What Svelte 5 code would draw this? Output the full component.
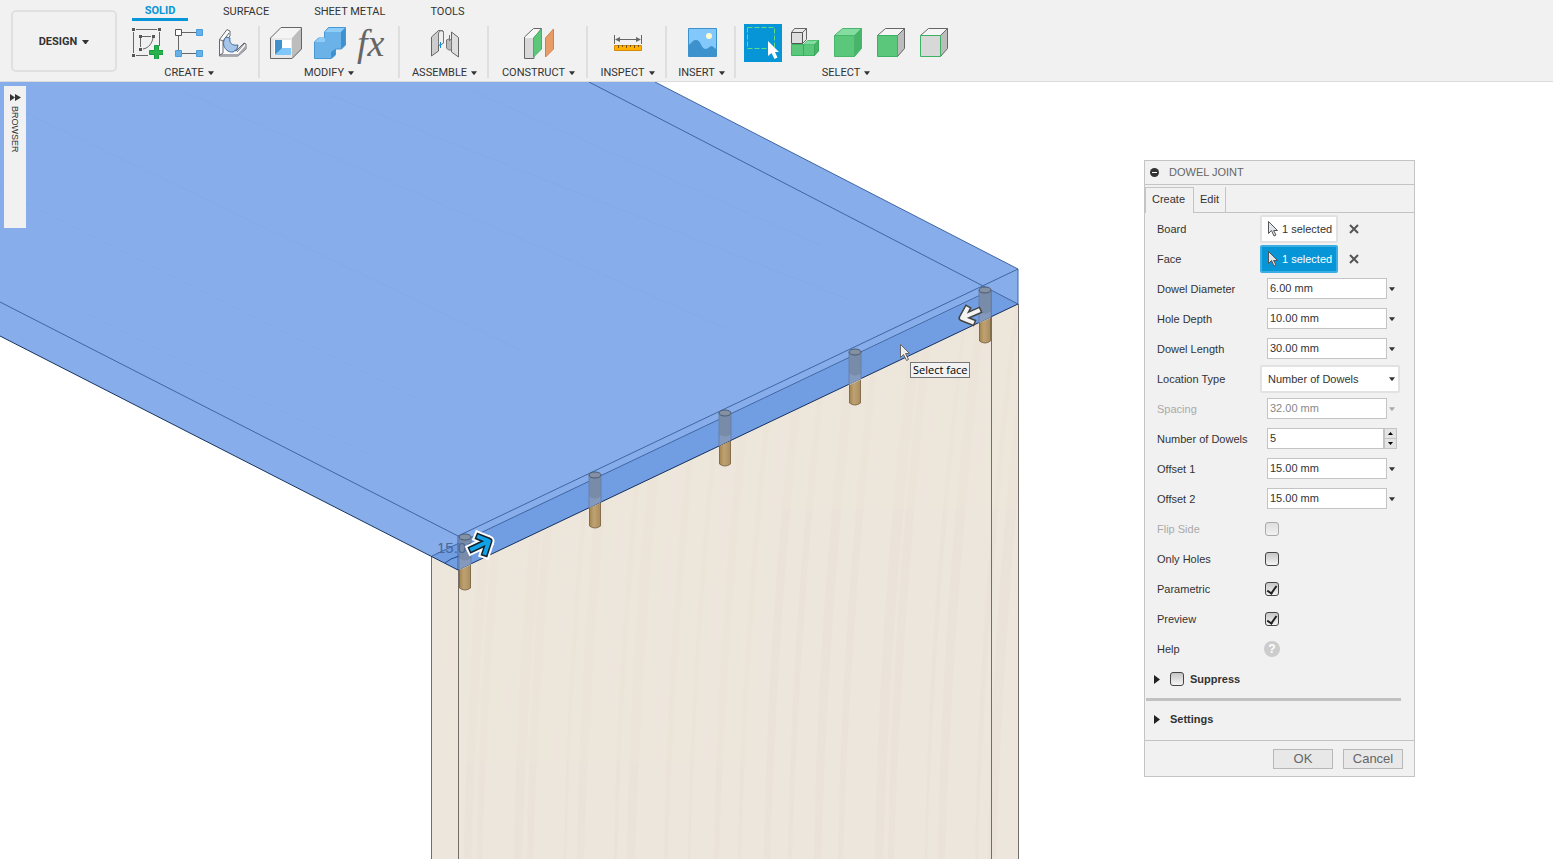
<script>
  const tabs = ['SOLID', 'SURFACE', 'SHEET METAL', 'TOOLS'];
  const dowels = [[465, 537], [595, 475], [725, 413], [855, 352], [985, 290]];
  const checks = [
    { id: 'flip', label: 'Flip Side', on: false, off: true },
    { id: 'holes', label: 'Only Holes', on: false },
    { id: 'parametric', label: 'Parametric', on: true },
    { id: 'preview', label: 'Preview', on: true }
  ];
  const streaks = Array.from({ length: 34 }, (_, i) => ({
    x: 440 + i * 17 + ((i * 7) % 11),
    w: 2 + ((i * 5) % 7),
    tone: i % 3 ? '#e7dccf' : '#f0e9df'
  }));
</script>

{#snippet caret()}
  <svg class="caret" width="7" height="4" viewBox="0 0 7 4" aria-hidden="true"><path d="M0 0h7L4 4H3z" /></svg>
{/snippet}

{#snippet pointer()}
  <svg width="12" height="18" viewBox="0 0 12 18" aria-hidden="true"><path d="M1.500 1.500v12l3-3 2.500 5.500 2-1-2.400-4.500h3.900z" fill="#dfe6ee" stroke="#555" /></svg>
{/snippet}

{#snippet field(id, label, value, off = false)}
  <div class="row" class:off>
    <label for={id}>{label}</label>
    <div class="value entry">
      <input {id} type="text" {value} disabled={off} />
      <button type="button" class="drop" aria-label="{label} options" disabled={off}>{@render caret()}</button>
    </div>
  </div>
{/snippet}

<div class="app">
  <header>
    <button class="design">DESIGN {@render caret()}</button>
    <div class="ribbon">
      <nav>
        {#each tabs as tab, i}
          <a href="#{tab}" class:active={i === 0}>{tab}</a>
        {/each}
      </nav>
      <div class="groups">
        <section class="create">
          <div class="icons">
            <svg width="32" height="32" viewBox="0 0 32 32" aria-hidden="true">
              <path d="M2.500 5v21M5 2.500h21M28.500 5v14M5 28.500h12M9.500 11v9M11 9.500h9M22 11C21 16 18 21 12 22" fill="none" stroke="#666" />
              <path d="M1 1h3v3H1zM27 1h3v3h-3zM1 27h3v3H1zM8 8h3v3H8zM21 8h3v3h-3zM8 21h3v3H8z" fill="#555" />
              <path d="M23.500 18.500h4v5h5v4h-5v5h-4v-5h-5v-4h5z" fill="#27b24c" stroke="#159b3e" />
            </svg>
            <svg width="32" height="32" viewBox="0 0 32 32" aria-hidden="true">
              <path d="M9 5.500h14M5.500 9v14M9 26.500h14" stroke="#666" />
              <path d="M2.500 2.500h6v6h-6z" fill="#fff" stroke="#555" />
              <path d="M23.500 2.500h6v6h-6zM2.500 23.500h6v6h-6zM23.500 23.500h6v6h-6z" fill="#68b1e8" stroke="#4c9edb" />
            </svg>
            <svg width="32" height="32" viewBox="0 0 32 32" aria-hidden="true">
              <path d="M4.500 12.500 12 2.500l3 1.500v5l-3 3v9l9 3 8-8 2 1v5l-8 7H4.500z" fill="#fafafa" stroke="#666a70" />
              <path d="M5 27h18v2H5zM23 27l8-9v4l-8 7z" fill="#a6a8ad" />
              <path d="M22 25 30 16M4.500 12.500 8 14v12l-3 2M8 14l6-8" fill="none" stroke="#666a70" />
              <path d="M11 10c-6 7 0 16 7 15l4-3 1-4c-6 1-9-2-8-7z" fill="#a6c5e8" stroke="#416a9b" />
            </svg>
          </div>
          <button class="menu">CREATE {@render caret()}</button>
        </section>
        <section class="modify">
          <div class="icons">
            <svg width="34" height="34" viewBox="0 0 34 34" aria-hidden="true">
              <path d="m2 12 9-10h21L23 12z" fill="#f4f4f4" /><path d="M23 12 32 2v22l-9 9z" fill="#bdbdbd" />
              <path d="M2 12h21v21H2z" fill="#e8e8e8" /><path d="M1.500 12 12 1.500h20.500V23L23 32.500H1.500z" fill="none" stroke="#666" />
              <path d="M5 14h17v15H5z" fill="#fff" /><path d="M6 14h7v9l-7 6z" fill="#3e91cc" /><path d="m6 29 7-7h9v7z" fill="#80c8fb" />
            </svg>
            <svg width="34" height="34" viewBox="0 0 34 34" aria-hidden="true">
              <path d="m1.500 16 4-4h6V6l4-4.500h17V19l-4 4h-6v6l-4 3.500h-17z" fill="#6ab2e8" stroke="#4799d4" />
              <path d="m12 6 4-4h16l-4 4zM2 16l4-4h6v4z" fill="#8dcdfb" />
              <path d="m28 6 4-4v17l-4 4zM18 26l4-3v6l-4 3z" fill="#3d91cf" />
            </svg>
            <span class="fx">fx</span>
          </div>
          <button class="menu">MODIFY {@render caret()}</button>
        </section>
        <section class="assemble">
          <div class="icons">
            <svg width="30" height="32" viewBox="0 0 30 32" aria-hidden="true">
              <path d="m1.500 10 7-6.500h4l1 1V16l-4 2h-1v6l-7 5z" fill="#cdcdcd" stroke="#666" />
              <path d="M8.500 6q2-4 5-1v11l-3 2h-2z" fill="#efefef" stroke="#777" />
              <path d="m21.500 5 7 5.500V30l-7-5z" fill="#dedede" stroke="#666" />
              <path d="M16.500 13q2-2 5 0v10h-3l-2-2z" fill="#bbb" stroke="#777" /><path d="M10.500 15v6M19.500 8v6" stroke="#168bd5" />
            </svg>
          </div>
          <button class="menu">ASSEMBLE {@render caret()}</button>
        </section>
        <section class="construct">
          <div class="icons">
            <svg width="32" height="34" viewBox="0 0 32 34" aria-hidden="true">
              <path d="m1.500 11 9-8.500h8L11 12v20.500H1.500z" fill="#f7f7f7" stroke="#666" /><path d="M2 12h8v20H2z" fill="#d8d8d8" />
              <path d="m10.500 12 8-9v20l-8 8z" fill="#5bc77b" stroke="#41b163" /><path d="m22.500 12 8-9v20l-8 8z" fill="#e89c67" stroke="#d77f43" />
            </svg>
          </div>
          <button class="menu">CONSTRUCT {@render caret()}</button>
        </section>
        <section class="inspect">
          <div class="icons">
            <svg width="30" height="32" viewBox="0 0 30 32" aria-hidden="true">
              <path d="M1.500 8v9M28.500 8v9M4 12.500h22" stroke="#666" /><path d="m2 12.500 5-2.500v5zM28 12.500 23 10v5z" fill="#666" />
              <path d="M1.500 18.500h27v5h-27z" fill="#ffb000" stroke="#d88b0b" /><path d="M5.500 18v3M9.500 18v2M13.500 18v3M17.500 18v2M21.500 18v3M25.500 18v2" stroke="#795215" />
            </svg>
          </div>
          <button class="menu">INSPECT {@render caret()}</button>
        </section>
        <section class="insert">
          <div class="icons">
            <svg width="30" height="32" viewBox="0 0 30 32" aria-hidden="true">
              <path d="M1.500 1.500h28v28h-28z" fill="#82c8fb" stroke="#3d91cc" /><path d="M2 18c3-3 4-5 7-5 5 0 5 8 9 9 4 0 4-3 7-3l4 3v7H2z" fill="#3d91cc" /><circle cx="22" cy="9" r="3" fill="#fffbd0" />
            </svg>
          </div>
          <button class="menu">INSERT {@render caret()}</button>
        </section>
        <section class="select">
          <div class="icons">
            <svg class="picked" width="38" height="38" viewBox="0 0 38 38" aria-hidden="true">
              <path d="M3.500 3.500h27v21h-27z" fill="none" stroke="#5edb87" stroke-dasharray="5 2" /><path d="M24 17v15l3.500-3 3 6 3-1.500-2.500-5.500h4z" fill="#fff" />
            </svg>
            <svg width="30" height="32" viewBox="0 0 30 32" aria-hidden="true">
              <path d="M1.500 17.500h23v11h-23z" fill="#5bc77b" stroke="#3bb660" /><path d="m13.500 17.500 4-4h11l-4 4z" fill="#83dca0" stroke="#54bd77" /><path d="m24.500 17.500 4-4V24l-4 4.500zM13.500 17v12" fill="#46b469" stroke="#3aaa5c" />
              <path d="m1.500 5.500 3-4h12l-4 4zM12.500 5.500l4-4v11l-4 4z" fill="#e9e9e9" stroke="#666" /><path d="M1.500 5.500h11v11h-11z" fill="#ddd" stroke="#555" />
            </svg>
            {#each ['solid', 'face', 'edge'] as kind}
              <svg class="cube {kind}" width="30" height="32" viewBox="0 0 30 32" aria-hidden="true">
                <path class="lid" d="m1.500 8.500 8-7h19l-7 7z" /><path class="side" d="m21.500 8.500 7-7v20l-7 8z" /><path class="front" d="M1.500 8.500h20v21h-20z" />
              </svg>
            {/each}
          </div>
          <button class="menu">SELECT {@render caret()}</button>
        </section>
      </div>
    </div>
  </header>

  <main>
    <svg class="scene" width="1553" height="777" viewBox="0 82 1553 777" role="img" aria-label="Board with five dowels">
      <defs>
        <linearGradient id="wood"><stop offset="0" stop-color="#a4854f" /><stop offset=".4" stop-color="#bfa274" /><stop offset="1" stop-color="#ab8c5c" /></linearGradient>
        <clipPath id="panel"><path d="M432 556 991 290l27 14v555H432z" /></clipPath>
      </defs>
      <path d="M432 556 991 290l27 14v555H432z" fill="#ede6dc" />
      <g clip-path="url(#panel)" opacity=".22">
        {#each streaks as s}
          <path d="M{s.x} 859Q{s.x + 4} 570 {s.x + 45} 270h{s.w}Q{s.x + s.w + 8} 580 {s.x + s.w} 859z" fill={s.tone} />
        {/each}
      </g>
      <path d="M431.500 556v303M458.500 570v289M991.500 316v543M1018.500 304v555" stroke="#726d68" />
      <path d="M0 82h655l363 187v35L458 570 0 336z" fill="#87aeea" />
      <path d="M432 556 991 291l27 13-560 266z" fill="#719de2" />
      <g fill="none" stroke="#7fa7e6" opacity=".4">
        <path d="M20 110 520 350M180 90 730 330M0 190 420 400M80 310 380 460M330 95 850 300M470 90 820 245" />
      </g>
      <g fill="none" stroke="#3f66a3">
        <path d="m655 82 363 187v35M589 82l396 205 33 17M0 302l458 234 560-267M432 556l559-266v26M458 536v34" />
        <path d="m0 336 458 234 560-266" stroke="#17335f" />
      </g>
      <path d="m445 563 6-4 14-5" fill="none" stroke="#214b8a" />
      {#each dowels as [x, y]}
        <g transform="translate({x} {y})">
          <path d="M-6 0v33l12-6V0z" fill="#8399bd" />
          <path d="M-6 0v21q6 5 12 0V0z" fill="#788ba8" />
          <path d="M-5.500 33 5.500 28v23q-5.500 4-11 0z" fill="url(#wood)" />
          <path d="M-5.500 33v18q5.500 4 11 0V28" fill="none" stroke="#826d4c" />
          <path d="M-6 0v33M6 0v27" stroke="#6680ab" />
          <ellipse rx="6" ry="3" fill="#8491a5" stroke="#4c5a70" />
        </g>
      {/each}
      <text x="437" y="553" class="dimension">15.00</text>
      <g fill="none" stroke-linejoin="round" stroke-linecap="square">
        <path d="m472 549 15-7m-8-5 10 4-4 12" stroke="#fff" stroke-width="11" />
        <path d="m472 549 15-7m-8-5 10 4-4 12" stroke="#14222b" stroke-width="7" />
        <path d="m472 549 15-7m-8-5 10 4-4 12" stroke="#10a1e6" stroke-width="4" />
        <path d="m978 311-14 6m3-8-5 9 10 4" stroke="#444" stroke-width="7" />
        <path d="m978 311-14 6m3-8-5 9 10 4" stroke="#f3f3f3" stroke-width="4" />
      </g>
      <path d="M900.500 344.500v13l3-3 3 6 2-1-3-6h4z" fill="#eee" stroke="#666" />
    </svg>
    <button class="browser"><svg width="11" height="7" viewBox="0 0 11 7" aria-hidden="true"><path d="m0 0 5 3.500L0 7zM5 0l6 3.500L5 7z" fill="#333" /></svg><span>BROWSER</span></button>
    <div class="tip" role="tooltip">Select face</div>

    <form class="dialog" onsubmit={(e) => e.preventDefault()}>
      <h2><svg width="9" height="9" viewBox="0 0 9 9" aria-hidden="true"><circle cx="4.500" cy="4.500" r="4.500" fill="#333" /><path d="M2 4h5v1H2z" fill="#fff" /></svg>DOWEL JOINT</h2>
      <div class="modes"><button type="button" class="current">Create</button><button type="button">Edit</button></div>
      <div class="rows">
        {#each ['Board', 'Face'] as name, i}
          <div class="row">
            <span>{name}</span>
            <div class="value wide">
              <button type="button" class="picker" class:chosen={i === 1} aria-label="{name}: 1 selected">{@render pointer()}1 selected</button>
              <button type="button" class="clear" aria-label="Clear {name}"><svg width="10" height="10" viewBox="0 0 10 10" aria-hidden="true"><path d="m1 1 8 8M9 1 1 9" stroke="#555" stroke-width="2" /></svg></button>
            </div>
          </div>
        {/each}
        {@render field('diameter', 'Dowel Diameter', '6.00 mm')}
        {@render field('depth', 'Hole Depth', '10.00 mm')}
        {@render field('length', 'Dowel Length', '30.00 mm')}
        <div class="row">
          <label for="location">Location Type</label>
          <div class="value wide combo"><select id="location"><option>Number of Dowels</option></select>{@render caret()}</div>
        </div>
        {@render field('spacing', 'Spacing', '32.00 mm', true)}
        <div class="row">
          <label for="count">Number of Dowels</label>
          <div class="value entry"><input id="count" class="count" type="text" value="5" /><div class="spin"><button type="button" aria-label="More"><svg width="5" height="3" viewBox="0 0 5 3"><path d="M0 3h5L2.500 0z" /></svg></button><button type="button" aria-label="Fewer"><svg width="5" height="3" viewBox="0 0 5 3"><path d="M0 0h5L2.500 3z" /></svg></button></div></div>
        </div>
        {@render field('offset1', 'Offset 1', '15.00 mm')}
        {@render field('offset2', 'Offset 2', '15.00 mm')}
        {#each checks as c}
          <div class="row" class:off={c.off}><label for={c.id}>{c.label}</label><div class="value mark"><input id={c.id} type="checkbox" checked={c.on} disabled={c.off} /></div></div>
        {/each}
        <div class="row"><span>Help</span><div class="value mark"><button type="button" class="help" aria-label="Help">?</button></div></div>
      </div>
      <div class="fold"><svg width="6" height="9" viewBox="0 0 6 9" aria-hidden="true"><path d="m0 0 6 4.500L0 9z" fill="#222" /></svg><input id="suppress" type="checkbox" /><label for="suppress">Suppress</label></div>
      <hr />
      <div class="fold settings"><svg width="6" height="9" viewBox="0 0 6 9" aria-hidden="true"><path d="m0 0 6 4.500L0 9z" fill="#222" /></svg><span>Settings</span></div>
      <footer><button type="button">OK</button><button type="button">Cancel</button></footer>
    </form>
  </main>
</div>

<style>
  :global(body) { margin: 0; background: #fff; }
  .app { display: flex; flex-direction: column; min-height: 100vh; font: 11px/14px "Liberation Sans", Arial, sans-serif; color: #333; overflow: hidden; }
  * { box-sizing: border-box; }
  button, input, select { font: inherit; color: inherit; margin: 0; padding: 0; border: 0; background: none; border-radius: 0; }
  svg { flex: none; display: block; }
  .caret { fill: #333; }
  header { display: flex; gap: 15px; height: 82px; padding-left: 11px; background: #f1f1f1; border-bottom: 1px solid #dcdcdc; font-family: Roboto, sans-serif; font-size: 11px; }
  .design { display: flex; align-items: center; justify-content: center; gap: 5px; width: 106px; height: 62px; margin-top: 10px; border: 2px solid #e0e0e0; border-radius: 5px; font-weight: 700; padding-top: 1px; }
  nav { display: flex; gap: 45px; height: 24px; }
  nav a { padding: 5px 0 0; color: #333; text-decoration: none; height: 21px; }
  nav .active { width: 56px; margin-right: -10px; color: #0696d7; font-weight: 700; border-bottom: 3px solid #0696d7; line-height: 12px; text-align: center; }
  .groups { display: flex; }
  section { display: flex; flex-direction: column; align-items: center; gap: 3px; height: 57px; padding-right: 2px; background: linear-gradient(#dfdfdf, #dfdfdf) right 2px / 2px 52px no-repeat; }
  .icons { display: flex; align-items: center; height: 38px; gap: 10px; }
  .menu { display: flex; align-items: center; gap: 4px; height: 16px; }
  .menu .caret { width: 6px; }
  .create { width: 128px; padding-right: 14px; }
  .modify { width: 140px; }
  .assemble { width: 89px; padding: 0; }
  .construct { width: 99px; padding: 0; }
  .inspect { width: 79px; padding: 0; }
  .insert { width: 69px; padding: 0; }
  .select { width: 220px; padding: 0; background: none; }
  .select .icons { gap: 13px; }
  .picked { background: #0696d7; margin-right: -5px; }
  .fx { font: italic 38px/34px "Liberation Serif", serif; color: #666; width: 32px; }
  .cube { stroke: #666; fill: #5bc77b; }
  .cube .lid { fill: #f5f5f5; }
  .cube .side { fill: #bcbcbc; }
  .cube .front { stroke: #3bb163; }
  .cube.solid { stroke: #49b66c; }
  .cube.solid .lid { fill: #83dca0; }
  .cube.solid .side { fill: #48b469; }
  .cube.solid .front { stroke: #49b66c; }
  .cube.edge .front { fill: #d8d8d8; }
  main { position: relative; flex: 1; }
  .scene { position: absolute; left: 0; top: 0; }
  .dimension { font: 15px "Liberation Sans", sans-serif; fill: #4a6797; }
  .browser { position: absolute; left: 4px; top: 4px; width: 22px; height: 142px; background: #f1f1f1; display: flex; flex-direction: column; align-items: center; gap: 5px; padding-top: 8px; font-size: 9px; }
  .browser span { writing-mode: vertical-rl; }
  .tip { position: absolute; left: 910px; top: 280px; padding: 0 2px; border: 1px solid #777; background: #f2f2f2; color: #000; font: 11px/14px "Open Sans", sans-serif; }
  .dialog { position: absolute; right: 138px; top: 78px; width: 271px; background: #f1f1f1; border: 1px solid #c4c4c4; }
  h2 { display: flex; align-items: center; gap: 10px; height: 24px; margin: 0; padding: 0 0 1px 5px; font-size: 11px; font-weight: 400; color: #666; border-bottom: 1px solid #c4c4c4; }
  .modes { display: flex; height: 28px; padding-top: 2px; border-bottom: 1px solid #c4c4c4; }
  .modes button { height: 25px; padding: 0 6px 2px; border-right: 1px solid #c4c4c4; }
  .modes .current { height: 26px; padding: 0 8px 3px 6px; border-top: 1px solid #c4c4c4; border-left: 1px solid #c4c4c4; background: #f1f1f1; }
  .rows { padding: 1px 12px 0; }
  .row { display: flex; align-items: center; height: 30px; }
  .row > :first-child { width: 110px; }
  .off { color: #aaa; }
  .off input { color: #888; }
  .value { display: flex; align-items: center; }
  .wide { margin-left: -7px; }
  .mark { margin-left: -2px; padding-bottom: 1px; }
  .entry { padding-bottom: 1px; }
  .entry input { width: 120px; height: 21px; border: 1px solid #c4c4c4; background: #fff; padding: 0 2px 1px; }
  .entry .count { width: 117px; }
  .drop { padding: 3px 2px; }
  .entry .caret, .combo .caret { width: 6px; }
  .off .caret { fill: #aaa; }
  .picker { display: flex; align-items: center; gap: 3px; width: 78px; height: 28px; padding-left: 5px; background: #fff; border: 2px solid #e2e2e2; border-radius: 2px; white-space: nowrap; }
  .picker.chosen { background: #0696d7; border-color: #3aaee2; color: #fff; }
  .clear { padding: 6px 11px; }
  .combo { position: relative; }
  select { appearance: none; width: 140px; height: 28px; padding-left: 6px; background: #fff; border: 2px solid #e2e2e2; border-radius: 2px; }
  .combo .caret { position: absolute; right: 5px; pointer-events: none; }
  .spin { display: grid; width: 13px; height: 21px; border: 1px solid #c4c4c4; background: #e4e4e4; }
  .spin button { display: grid; place-items: center; }
  .spin button + button { border-top: 1px solid #c4c4c4; }
  input[type="checkbox"] { appearance: none; width: 14px; height: 14px; border: 1px solid #444; border-radius: 3px; background: linear-gradient(#c6c6c6, #f5f5f5); display: grid; place-items: center; }
  input:disabled[type="checkbox"] { border-color: #aaa; background: linear-gradient(#dedede, #f1f1f1); }
  input:checked::before { content: ""; width: 4px; height: 8px; border: solid #222; border-width: 0 2px 2px 0; transform: rotate(35deg); }
  .help { width: 16px; height: 16px; margin-left: -1px; border-radius: 50%; background: #ccc; color: #fff; font-weight: 700; font-size: 12px; }
  .fold { display: flex; align-items: center; gap: 6px; height: 30px; padding-left: 9px; font-weight: 700; }
  .fold svg { margin-right: 4px; }
  hr { height: 3px; margin: 4px 13px 3px 1px; border: 0; background: #c1c1c1; }
  .settings { height: 36px; padding-bottom: 6px; }
  footer { display: flex; justify-content: flex-end; gap: 10px; padding: 8px 11px 7px; border-top: 1px solid #c4c4c4; }
  footer button { width: 60px; height: 20px; border: 1px solid #b8b8b8; background: #e8e8e8; color: #666; font-size: 13px; }
</style>
